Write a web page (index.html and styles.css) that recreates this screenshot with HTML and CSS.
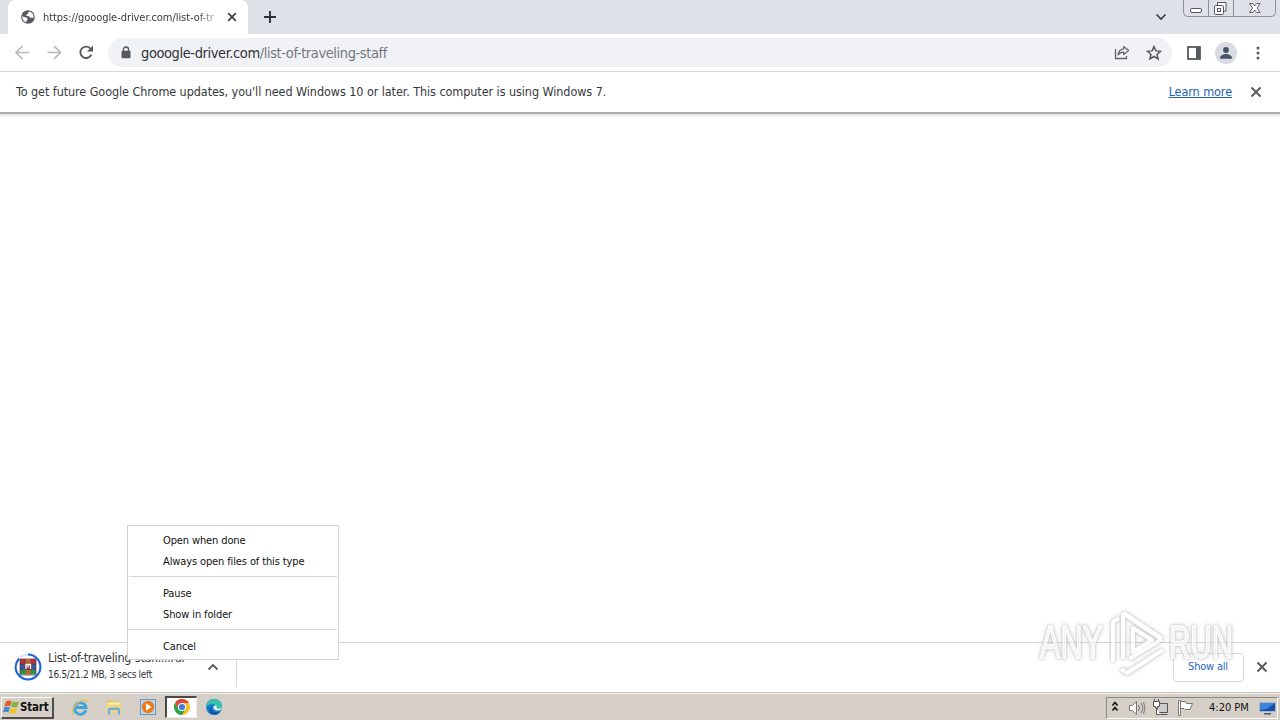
FILE: index.html
```html
<!DOCTYPE html>
<html lang="en">
<head>
<meta charset="utf-8">
<title>gooogle-driver.com</title>
<link rel="stylesheet" href="styles.css">
</head>
<body>
<div class="screen">
  <header class="tabstrip">
    <div class="tab">
      <svg class="globe" width="14" height="14" viewBox="0 0 14 14"><circle cx="7" cy="7" r="6.8" fill="#55585c"/><path d="M1.3 6.3 4 7.3l2 .5.8 1.6-1.5 1.3.2 1.8C2.800 11.700 1 9.500 1.300 6.300zM8.300 1.500 7 2.800l.2 1-1.700.7-.2 1.500 2.700.2 1.200 1.500 2-.2 1.400.7c.5-3.200-1.300-5.900-4.300-6.700z" fill="#fff"/></svg>
      <span class="tab-title">https://gooogle-driver.com/list-of-tr</span>
      <svg class="tab-close" width="10" height="10" viewBox="0 0 10 10"><path d="M1.200 1.200l7.600 7.600M8.800 1.200L1.200 8.800" stroke="#3c4043" stroke-width="1.700"/></svg>
    </div>
    <svg class="new-tab" width="12" height="12" viewBox="0 0 12 12"><path d="M6 0v12M0 6h12" stroke="#303238" stroke-width="1.900"/></svg>
    <svg class="tab-search" width="12" height="8" viewBox="0 0 12 8"><path d="M1.500 1.500L6 6l4.500-4.500" fill="none" stroke="#3c4043" stroke-width="1.700"/></svg>
    <svg class="caption" width="93" height="18" viewBox="0 0 93 18"><path d="M.5 0v12.500q0 4 4 4h84q4 0 4-4V0M25.500 0v16.500M50.500 0v16.500" fill="none" stroke="#8d9199"/><rect x="7.500" y="8.500" width="11" height="4" rx="1.500" fill="#fff" stroke="#54575e"/><path d="M34.500 5V2.500h8.500v8.500h-2.500" fill="#fff" stroke="#54575e"/><rect x="31.500" y="5.500" width="9" height="9" rx="1" fill="#fff" stroke="#54575e"/><rect x="34.500" y="8.500" width="3" height="3" fill="none" stroke="#54575e"/><path d="M66.500 3.500h3.300l2 2.300 2-2.300H77l-3 4.500 3 4.500h-3.200l-2-2.300-2 2.300h-3.300l3-4.500z" fill="#fff" stroke="#5d6067"/></svg>
  </header>
  <div class="toolbar">
    <svg class="nav" width="100" height="36" viewBox="0 0 100 36"><path d="M29.200 17.500H16.300M22.500 11L16 17.500l6.500 6.500M47.300 17.500h12.900M54 11l6.500 6.500-6.500 6.500" fill="none" stroke="#b7b9bc" stroke-width="1.700"/><path d="M91.300 19.600A5.700 5.700 0 1 1 90.200 13.400" fill="none" stroke="#55585c" stroke-width="1.900"/><path d="M93 10.500v6h-6z" fill="#55585c"/></svg>
    <div class="omnibox">
      <svg class="lock" width="10" height="13" viewBox="0 0 10 13"><path d="M2.500 5.500v-2a2.500 2.500 0 0 1 5 0v2" fill="none" stroke="#55585c" stroke-width="1.400"/><rect x=".5" y="4.700" width="9" height="7.600" rx="1" fill="#55585c"/></svg>
      <span class="url"><span class="host">gooogle-driver.com</span><span class="path">/list-of-traveling-staff</span></span>
      <svg class="share" width="16" height="15" viewBox="0 0 16 15"><path d="M1.500 4v9.500H12.500V11" fill="none" stroke="#5f6368" stroke-width="1.300"/><path d="M9.700 1.500l4.900 4-4.900 4V7.200C7 7.100 5.300 8 4 10c.3-3.200 2.200-5.600 5.700-6.100z" fill="none" stroke="#5f6368" stroke-width="1.200" stroke-linejoin="round"/></svg>
      <svg class="star" width="16" height="16" viewBox="0 0 16 16"><path d="M8 1.600l1.900 4.300 4.700.4L11 9.400l1.100 4.600L8 11.500 3.900 14 5 9.400 1.400 6.300l4.700-.4z" fill="none" stroke="#55585c" stroke-width="1.500"/></svg>
    </div>
    <svg class="panel" width="14" height="14" viewBox="0 0 14 14"><rect x="1" y="1" width="12" height="12" fill="none" stroke="#55585c" stroke-width="1.800"/><path d="M9 1h4v12H9z" fill="#55585c"/></svg>
    <svg class="avatar" width="22" height="22" viewBox="0 0 22 22"><circle cx="11" cy="11" r="11" fill="#d9dde3"/><circle cx="11" cy="8" r="2.900" fill="#48536b"/><path d="M5.200 16.700v-1.500c0-2 3.800-3.300 5.800-3.300s5.800 1.300 5.800 3.300v1.500z" fill="#48536b"/></svg>
    <svg class="dots" width="4" height="14" viewBox="0 0 4 14"><circle cx="2" cy="2" r="1.500" fill="#55585c"/><circle cx="2" cy="7" r="1.500" fill="#55585c"/><circle cx="2" cy="12" r="1.500" fill="#55585c"/></svg>
  </div>
  <div class="infobar">
    <span class="notice">To get future Google Chrome updates, you'll need Windows 10 or later. This computer is using Windows 7.</span>
    <a class="learn">Learn more</a>
    <svg class="close" width="12" height="12" viewBox="0 0 12 12"><path d="M1.500 1.500l9 9M10.500 1.500l-9 9" stroke="#55585c" stroke-width="1.900"/></svg>
  </div>
  <main class="page"></main>
  <footer class="shelf">
    <div class="download">
      <svg class="archive" width="28" height="28" viewBox="0 0 28 28"><circle cx="14" cy="14" r="12.400" fill="none" stroke="#d5e1f5" stroke-width="2"/><path d="M14 1.600A12.400 12.400 0 1 1 1.600 14Q2 9 5 5.500" fill="none" stroke="#1b66d2" stroke-width="2"/><path d="M6 6h16v5H6z" fill="#b92f40"/><path d="M6 11h16v5.500H6z" fill="#3458aa"/><path d="M6 16.500h16v5H6z" fill="#2d914c"/><path d="M6 6h16v16H6zM6 11.300h16M6 16.500h16" fill="none" stroke="#493b46" stroke-width=".7"/><path d="M12 6h4.500v16H12z" fill="#b86a2b"/><rect x="10.500" y="10.500" width="7.500" height="6.500" fill="#77404a"/><path d="M12 16v-4.500h4.500V16M14 11.500v3" fill="none" stroke="#fff" stroke-width="1.300"/></svg>
      <div class="file"><div class="file-name">List-of-traveling-staff....rar</div><div class="file-status">16.5/21.2 MB, 3 secs left</div></div>
      <svg class="chevron" width="12" height="8" viewBox="0 0 12 8"><path d="M1.500 6.500L6 2l4.500 4.500" fill="none" stroke="#55585c" stroke-width="1.800"/></svg>
    </div>
    <button class="show-all"><span>Show all</span></button>
    <svg class="close" width="12" height="12" viewBox="0 0 12 12"><path d="M1.500 1.500l9 9M10.500 1.500l-9 9" stroke="#55585c" stroke-width="1.900"/></svg>
  </footer>
  <div class="taskbar">
    <div class="start">
      <svg width="17" height="16" viewBox="0 0 17 16"><path d="M3 2.500Q5.500.5 8.500 2.100L7.100 7.300Q4.500 6 1.500 7.500z" fill="#e35b28"/><path d="M9.300 2.500q2.700 1.500 6.700 0l-1.500 5.300q-3.500 1.400-6.600 0z" fill="#83b642"/><path d="M1.200 8.500q2.800-1.400 5.600-.1L5.400 13.500Q3 12 0 13.500z" fill="#4487cf"/><path d="M7.700 9q2.800 1.400 6.500.1L12.600 14.300q-3 1.300-6.400-.2z" fill="#f3bf31"/></svg>
      <span>Start</span>
    </div>
    <div class="apps">
      <svg width="18" height="18" viewBox="0 0 18 18"><path d="M14.800 12.300A5.800 5.800 0 1 1 15 9.500H5" fill="none" stroke="#3aa4df" stroke-width="2.800"/><path d="M2.300 16.200C-1.500 14.500 4 5.500 10.500 2.500c4-1.800 6.400-.6 4.800 2.300" fill="none" stroke="#e3bd4b" stroke-width="1.300"/></svg>
      <svg width="18" height="18" viewBox="0 0 18 18"><path d="M2 2h5l1 1.500h7V13H2z" fill="#e4c766"/><path d="M3 4.500h12v4H3z" fill="#fff1b3"/><path d="M1.500 6.500h15v8h-15z" fill="#f1d77e"/><path d="M4 16.500v-4q0-1.700 1.700-1.700h6.600q1.700 0 1.700 1.700v4" fill="none" stroke="#72aedc" stroke-width="2.400"/></svg>
      <svg width="18" height="18" viewBox="0 0 18 18"><rect x="1.500" y="1.500" width="15" height="15" fill="#b9d6ef" stroke="#6698c5"/><circle cx="9" cy="9" r="6.200" fill="#ed7c17"/><path d="M7 5.300L12.500 9 7 12.700z" fill="#fff"/></svg>
      <div class="active-app"><svg width="18" height="18" viewBox="0 0 18 18"><circle cx="9" cy="9" r="8" fill="#f4bf24"/><path d="M2.070 5A8 8 0 0 1 15.930 5H9L5.540 11z" fill="#df4538"/><path d="M2.070 5A8 8 0 0 0 9 17l3.460-6H5.540z" fill="#30a151"/><circle cx="9" cy="9" r="4" fill="#fff"/><circle cx="9" cy="9" r="3.100" fill="#3e7de0"/></svg></div>
      <svg width="18" height="18" viewBox="0 0 18 18"><circle cx="9" cy="9" r="8" fill="#137fca"/><path d="M1 9C1.300 4 4.500 1 9 1c5 0 8 3.500 8 7 0 3-2.200 4-4.500 3.500-1.800-.4-1.300-1.300-1-2C11.500 6 5 4 1 9z" fill="#39bfae"/><path d="M7 8.500c-1.500 5 3.500 7 8.500 4.500-2 3.500-5 4.200-7.500 3.500-4.500-1.300-5-6.500-1-8z" fill="#1458a5"/><path d="M8.500 8.500c-.8 2.500 2 5.200 7.300 3.500l.9-2.500c-2 2-5.500 1.700-5-.5.400-1.500-2.600-2-3.200-.5z" fill="#e3eeee"/></svg>
    </div>
    <div class="tray">
      <svg width="82" height="18" viewBox="0 0 82 18"><path d="M1.500 6.500l2.500-3 2.500 3M1.500 11.500l2.500-3 2.500 3" fill="none" stroke="#111" stroke-width="1.600"/><g fill="#fff" stroke="#777"><path d="M18.500 6.500h3l4-4v13l-4-4h-3z"/><path d="M27.500 6q2 3 0 6M30 4q3.500 5 0 10M32.500 3q3 6 0 12" fill="none"/><path d="M46.500 4.500h10v9h-10z" fill="#ccc" stroke="#555"/><path d="M42.500 2.500h6v5h-2v1.500h-2V7.500h-2zM45.500 9v6.500h4M49.500 15.500h7" stroke="#555"/><path d="M43.500 0v3M47.500 0v3" stroke="#555"/><path d="M67.500 16.500V1.500h2v15zM69.500 2.500h5l1 2h6l-2.500 6h-5l-1-1h-3.500"/></g></svg>
      <span class="time">4:20 PM</span>
      <svg width="17" height="16" viewBox="0 0 17 16"><path d="M.5 2.500h16v9H.5z" fill="#174eaa" stroke="#aab6c9"/><path d="M1 3h15L8 9 1 10z" fill="#3c85da"/><path d="M5 13h7v1.500H5z" fill="#49566a"/></svg>
    </div>
  </div>
  <div class="menu">
    <div class="menu-group"><div>Open when done</div><div>Always open files of this type</div></div>
    <div class="menu-group"><div>Pause</div><div>Show in folder</div></div>
    <div class="menu-group"><div>Cancel</div></div>
  </div>
  <svg class="watermark" width="204" height="76" viewBox="0 0 204 76"><g fill="#fff" fill-opacity=".8" stroke="#fff" stroke-width="1.500"><text x="4" y="53" textLength="63" lengthAdjust="spacingAndGlyphs">ANY</text><text x="133" y="53" textLength="64" lengthAdjust="spacingAndGlyphs">RUN</text></g><g fill="none" stroke="#fff" stroke-linejoin="round"><path d="M87 8l39 26" stroke-width="5"/><path d="M87 8v46M93 54l33-20" stroke-width="4"/><path d="M77 57V17l6-4M85 64l6 4 36-23M97 23v24l19-12z" stroke-width="4"/></g></svg>
</div>
</body>
</html>
```
FILE: styles.css
```css
* { box-sizing: border-box; }
body { margin: 0; font-family: "DejaVu Sans Condensed", "DejaVu Sans", sans-serif; font-stretch: condensed; color: #36383c; }
svg { display: block; flex: none; }
.screen { position: relative; width: 1280px; height: 720px; display: flex; flex-direction: column; overflow: hidden; background: #fff; white-space: nowrap; }
.tabstrip { height: 34px; flex: none; background: #dee1e8; display: flex; align-items: flex-start; padding-left: 8px; }
.tab { width: 240px; height: 34px; background: #fff; border-radius: 7px 7px 0 0; display: flex; align-items: center; padding-left: 13px; }
.tab-title { width: 177px; margin-left: 8px; font-size: 11px; letter-spacing: -.06px; mask-image: linear-gradient(to right, #000 154px, transparent 180px); }
.tab-close { margin-left: 7px; }
.new-tab { margin: 11px 0 0 16px; }
.tab-search { margin: 13px 16px 0 auto; }
.caption { margin-right: 4px; }
.toolbar { height: 38px; flex: none; border-bottom: 1px solid #d8d9dc; display: flex; align-items: center; }
.nav { margin-right: 8px; }
.omnibox { width: 1064px; height: 29px; border-radius: 15px; background: #f0f2f5; display: flex; align-items: center; padding-left: 13px; }
.url { margin-left: 10px; font-size: 14.500px; letter-spacing: -.4px; }
.host { color: #303236; }
.path { color: #74787d; }
.share { margin-left: auto; }
.star { margin: 0 10px 0 16px; }
.panel { margin-left: 15px; }
.avatar { margin-left: 14px; }
.dots { margin-left: 19px; }
.infobar { height: 45px; flex: none; padding: 0 18px 5px 16px; display: flex; align-items: center; font-size: 12.500px; letter-spacing: -.07px; background: linear-gradient(to bottom, #fff 40px, #adadad 40px, #adadad 42px, #dedede 42px, #fff 45px); }
.notice, .learn { padding-bottom: 2px; }
.learn { margin-left: auto; margin-right: 18px; color: #2262b0; text-decoration: underline; }
.page { flex: 1; }
.shelf { height: 50px; flex: none; border-top: 1px solid #d2d3d5; display: flex; align-items: center; padding: 0 12px 1px 0; }
.download { width: 237px; height: 41px; align-self: flex-start; margin-top: 3px; border-right: 1px solid #d7d8da; display: flex; align-items: center; padding-left: 14px; }
.file { width: 154px; margin-left: 6px; }
.file-name { font-size: 12.500px; line-height: 16px; letter-spacing: -.3px; }
.file-status { font-size: 10px; line-height: 17px; letter-spacing: -.3px; }
.chevron { margin-left: 5px; }
.show-all { margin-left: auto; margin-right: 12px; width: 71px; height: 29px; padding: 0 1px 2px 0; border: 1px solid #d7d9dc; border-radius: 4px; background: #fff; color: #2866bd; font: 11px "DejaVu Sans Condensed", sans-serif; letter-spacing: -.2px; }
.taskbar { height: 28px; flex: none; background: #d5cfc8; border-top: 1px solid #c4c0ba; box-shadow: inset 0 1px #f4f2ee; display: flex; align-items: center; padding: 2px 2px 0 1px; }
.start { width: 53px; height: 22px; border: 1px solid #fff; border-right: 2px solid #504d49; border-bottom: 2px solid #504d49; display: flex; align-items: center; color: #111; }
.start svg { margin-left: 1px; }
.start span { font-size: 11.500px; font-weight: bold; letter-spacing: -.2px; }
.apps { display: flex; align-items: center; margin-left: 17px; gap: 16px; position: relative; top: -1px; }
.active-app { width: 32px; height: 22px; margin: 0 -8px; display: flex; align-items: center; justify-content: center; background: #fff; border: 1px solid #4c4945; border-left-width: 2px; border-top-width: 2px; border-right-color: #eee; border-bottom-color: #eee; }
.tray { width: 172px; height: 22px; margin-left: auto; border: 1px solid #8b8781; border-right-color: #fff; border-bottom-color: #fff; display: flex; align-items: center; padding: 0 1px 0 4px; }
.time { margin: 0 auto 0 16px; font-size: 11px; color: #111; }
.menu { position: absolute; left: 127px; top: 525px; width: 212px; height: 135px; border: 1px solid #d1d2d4; background: #fff; font-size: 11px; letter-spacing: -.12px; line-height: 21px; color: #111; padding: 1px; }
.menu-group { padding: 3px 0 4px 34px; }
.menu-group + .menu-group { padding-top: 6px; border-top: 1px solid #d8d8d8; }
.watermark { position: absolute; left: 1036px; top: 605px; font: 46px "Liberation Sans", sans-serif; filter: drop-shadow(0 0 1px #aaa) drop-shadow(0 0 2px #ccc); opacity: .75; }
```
